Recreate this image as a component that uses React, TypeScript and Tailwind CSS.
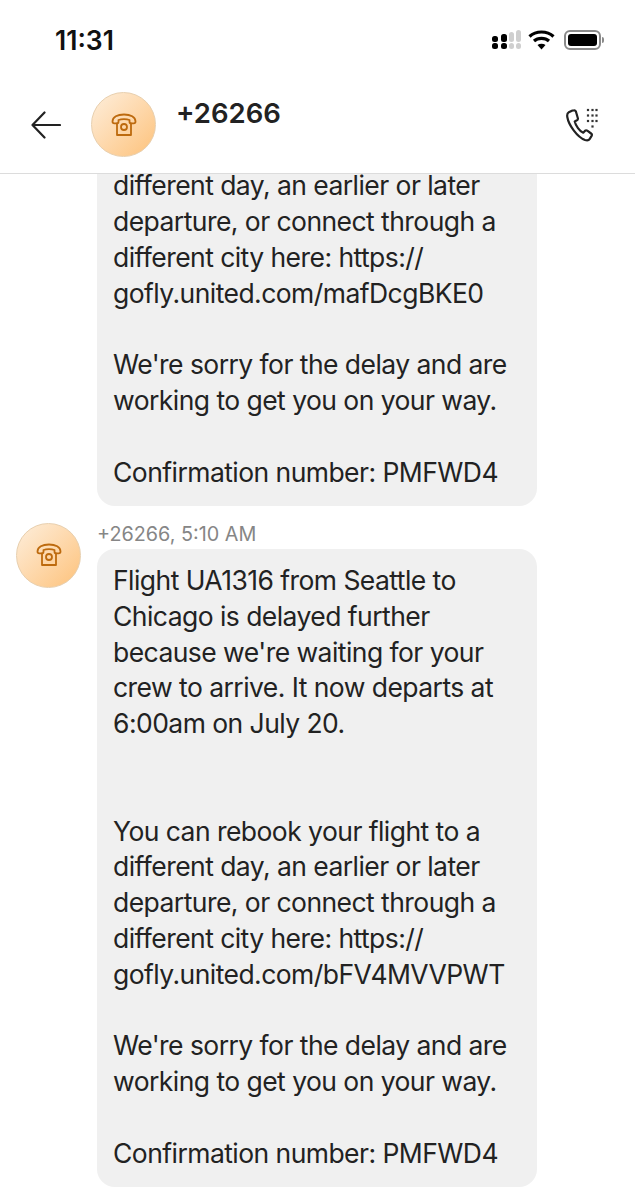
const PhoneGlyph = ({ size }: { size: number }) => (
  <svg width={size} height={size} viewBox="0 0 26 26" fill="none" stroke="#bd6a0e" strokeWidth="1.800" strokeLinejoin="round" strokeLinecap="round">
    <path d="M1.500 9.500C1.500 5 6.500 2.500 13 2.500S24.500 5 24.500 9.500c0 1.200-.7 1.900-1.800 1.900h-2.400c-1.100 0-1.800-.7-1.800-1.700V8c-1.500-.6-3.200-.9-5.500-.9S9 7.400 7.500 8v1.700c0 1-.7 1.700-1.800 1.700H3.300c-1.100 0-1.800-.7-1.800-1.900Z" />
    <path d="M6 11.500V23h14V11.500" />
    <circle cx="13" cy="15" r="3" />
  </svg>
);

const Avatar = ({ glyph }: { glyph: number }) => (
  <div className="flex h-[65px] w-[65px] shrink-0 items-center justify-center rounded-full border border-[#e8cfae] bg-gradient-to-br from-[#fdeedb] to-[#fdc27a]">
    <PhoneGlyph size={glyph} />
  </div>
);

const Bubble = ({ lines }: { lines: string[] }) => (
  <div className="w-[440px] rounded-[18px] bg-[#f0f0f0] px-4 pt-[14px] pb-[15.500px] text-[26.500px] leading-[35.800px] tracking-[-0.55px] text-[#222222]">
    {lines.map((l, i) => (
      <div key={i} className="h-[35.800px] whitespace-nowrap">{l}</div>
    ))}
  </div>
);

const first = [
  "You can rebook your flight to a",
  "different day, an earlier or later",
  "departure, or connect through a",
  "different city here: https://",
  "gofly.united.com/mafDcgBKE0",
  "",
  "We're sorry for the delay and are",
  "working to get you on your way.",
  "",
  "Confirmation number: PMFWD4",
];

const second = [
  "Flight UA1316 from Seattle to",
  "Chicago is delayed further",
  "because we're waiting for your",
  "crew to arrive. It now departs at",
  "6:00am on July 20.",
  "",
  "",
  "You can rebook your flight to a",
  "different day, an earlier or later",
  "departure, or connect through a",
  "different city here: https://",
  "gofly.united.com/bFV4MVVPWT",
  "",
  "We're sorry for the delay and are",
  "working to get you on your way.",
  "",
  "Confirmation number: PMFWD4",
];

const dots: [number, number][] = [
  [22, 1], [26.500, 1], [30.500, 1],
  [22, 6.500], [26.500, 6.500], [30.500, 6.500],
  [22, 12], [26.500, 12], [30.500, 12],
  [26.500, 17.500],
];

export default function App() {
  return (
    <div className="flex h-[1200px] w-[635px] flex-col overflow-hidden bg-white font-['Inter',sans-serif]">
      <div className="relative z-10 h-[174px] shrink-0 border-b border-[#dcdcdc] bg-white">
        <div className="flex h-[80px] items-start justify-between pt-[25px] pl-[55px] pr-[31px]">
          <span className="text-[26.500px] leading-[30px] font-semibold text-[#111111]">11:31</span>
          <div className="flex items-center gap-[7px] pt-[5px]">
            <svg width="30" height="20" viewBox="0 0 30 20" fill="#000">
              <rect x="1" y="6" width="6" height="6" rx="2.500" />
              <rect x="1" y="13" width="6" height="6" rx="2.500" />
              <rect x="10" y="4" width="6" height="8" rx="2.500" />
              <rect x="10" y="13" width="6" height="6" rx="2.500" />
              <rect x="18" y="2" width="5" height="10" rx="2.500" fill="#cfcfcf" />
              <rect x="18" y="13" width="5" height="6" rx="2.500" fill="#cfcfcf" />
              <rect x="25" y="0" width="5" height="12" rx="2.500" fill="#cfcfcf" />
              <rect x="25" y="13" width="5" height="6" rx="2.500" fill="#cfcfcf" />
            </svg>
            <svg width="27" height="20" viewBox="0 0 27 20" fill="none" stroke="#000" strokeWidth="3.200">
              <path d="M1.500 6.500C8 .5 19 .5 25.500 6.500" />
              <path d="M6 11c4-3.500 11-3.500 15 0" />
              <path d="M13.500 19.500 9.500 15c2.300-1.700 5.700-1.700 8 0Z" fill="#000" stroke="none" />
            </svg>
            <div className="flex items-center pl-[2px]">
              <div className="h-[20px] w-[37px] rounded-[6px] border-2 border-[#8a8a8a] p-[2px]">
                <div className="h-full w-full rounded-[3px] bg-black" />
              </div>
              <div className="ml-[1px] h-[6px] w-[2px] rounded-r-sm bg-[#8a8a8a]" />
            </div>
          </div>
        </div>
        <div className="flex items-start pl-[31px] pr-[36px] pt-[12px]">
          <svg className="mt-[19px] shrink-0" width="30" height="28" viewBox="0 0 30 28" fill="none" stroke="#222" strokeWidth="2.200" strokeLinecap="round" strokeLinejoin="round">
            <path d="M29 14H1.500M13.500 1.500 1.500 14l12 12.500" />
          </svg>
          <div className="ml-[30px]">
            <Avatar glyph={26} />
          </div>
          <span className="ml-[20px] flex-1 pt-[5px] text-[27.500px] leading-[32px] font-semibold text-[#222222]">+26266</span>
          <svg className="mt-[16px] shrink-0" width="33" height="34" viewBox="0 0 33 34" fill="none">
            <path d="M6.500 2.500 2.800 4.300C1.300 5.100.9 6.500 1.300 9c1.300 8 9.800 20 17.700 23 2.300.8 3.700.5 4.600-.9l2-3.200c.5-.9.300-1.800-.5-2.400l-3.800-2.800c-.8-.6-1.700-.5-2.400.2l-1.700 1.800c-3.400-1.200-7.700-7.400-8.500-11.300l2.200-1.100c.9-.5 1.200-1.300.9-2.300L9.900 3.500c-.4-1-1.400-1.400-2.300-1Z" stroke="#222" strokeWidth="2.200" strokeLinejoin="round" />
            <g fill="#333">
              {dots.map(([x, y]) => (
                <rect key={`${x}-${y}`} x={x - 1.100} y={y - 0.100} width="2.200" height="2.200" />
              ))}
            </g>
          </svg>
        </div>
      </div>
      <div className="flex min-h-0 flex-1 flex-col justify-end pb-[13px]">
        <div className="flex justify-start pl-[97px]">
          <Bubble lines={first} />
        </div>
        <div className="mt-[17px] flex items-start pl-[16px]">
          <Avatar glyph={26} />
          <div className="ml-[16px]">
            <div className="mb-[4px] text-[19.800px] leading-[22px] text-[#868686]">+26266, 5:10 AM</div>
            <Bubble lines={second} />
          </div>
        </div>
      </div>
    </div>
  );
}
